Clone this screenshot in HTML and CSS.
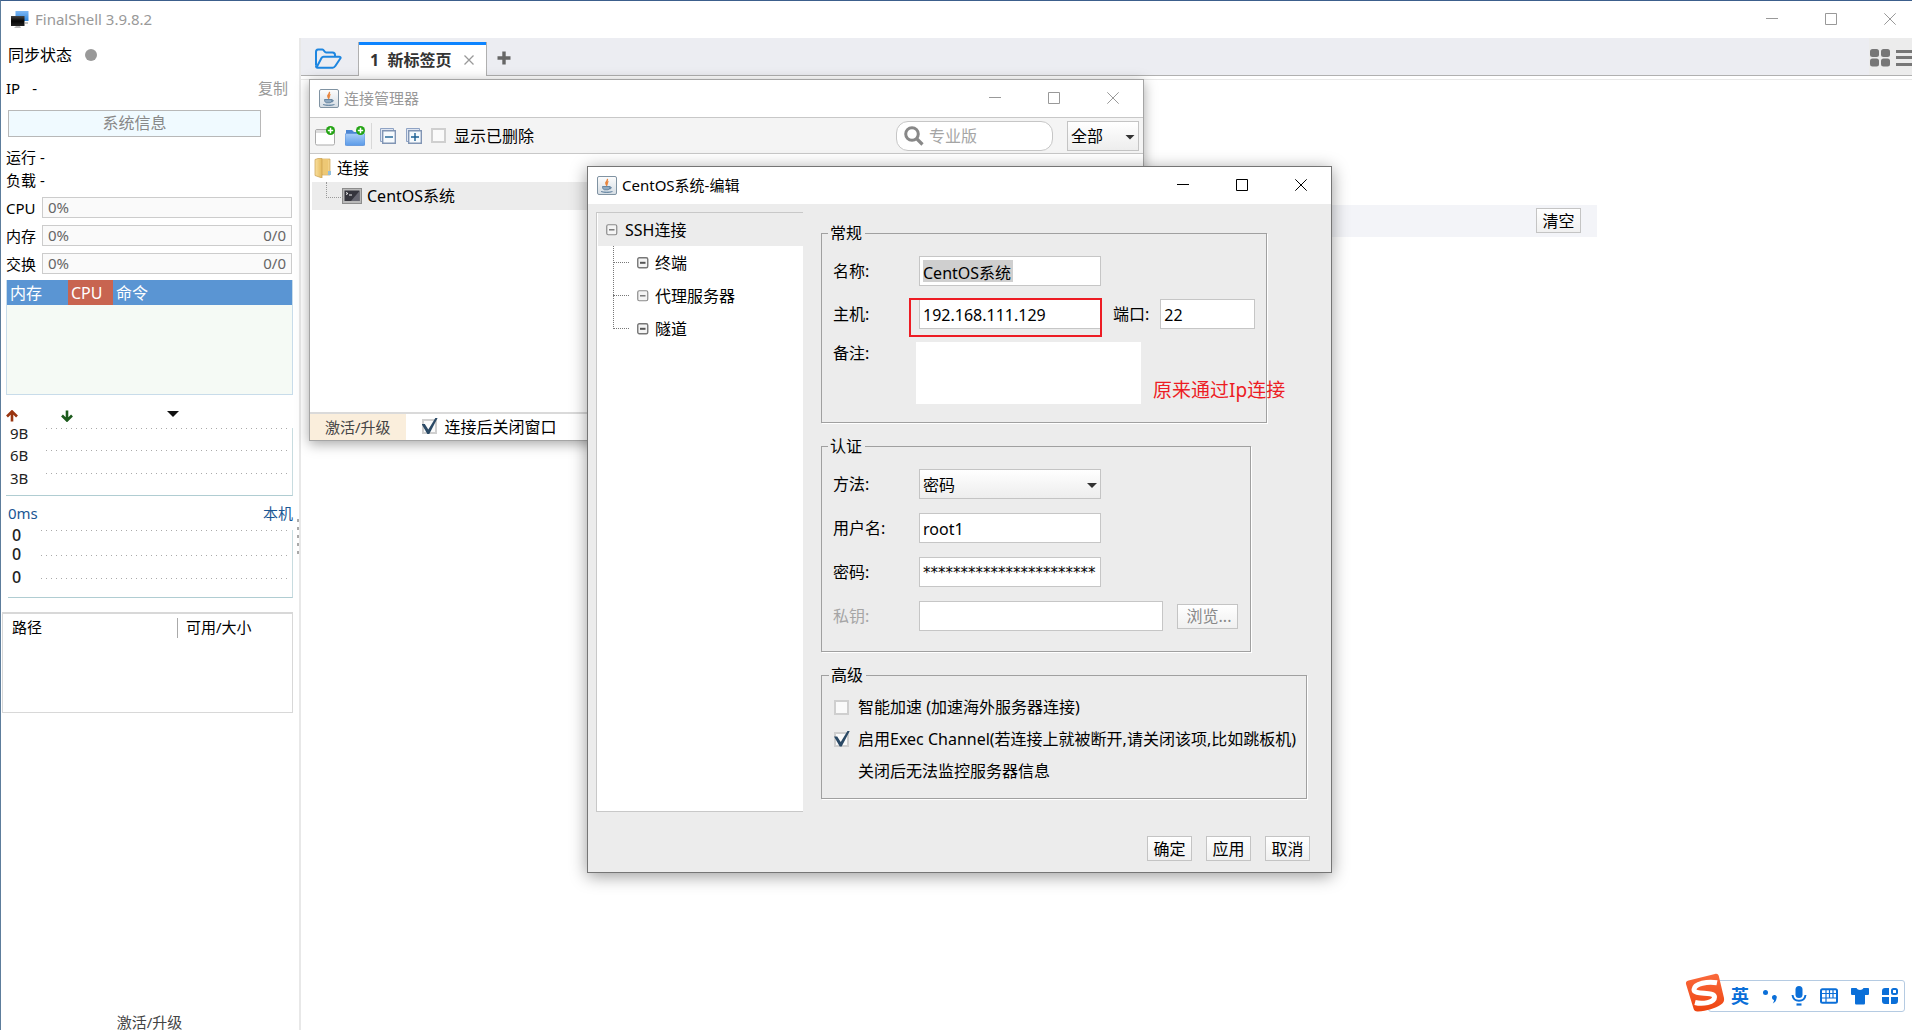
FILE: index.html
```html
<!DOCTYPE html>
<html lang="zh-CN">
<head>
<meta charset="utf-8">
<title>FinalShell 3.9.8.2</title>
<link rel="stylesheet" href="styles.css">
</head>
<body>
<svg class="defs" aria-hidden="true">
  <defs>
    <linearGradient id="g-blue" x1="0" y1="0" x2="0" y2="1"><stop offset="0" stop-color="#7db8f5"/><stop offset="1" stop-color="#2f86dc"/></linearGradient>
    <linearGradient id="g-fold" x1="0" y1="0" x2="0" y2="1"><stop offset="0" stop-color="#a9cdf8"/><stop offset="1" stop-color="#5b9be8"/></linearGradient>
    <linearGradient id="g-dark" x1="0" y1="0" x2="0" y2="1"><stop offset="0" stop-color="#444"/><stop offset=".5" stop-color="#050505"/><stop offset="1" stop-color="#222"/></linearGradient>
    <linearGradient id="g-gold" x1="0" y1="0" x2="1" y2="0"><stop offset="0" stop-color="#f9e0a0"/><stop offset="1" stop-color="#e5ba5c"/></linearGradient>
    <linearGradient id="g-java" x1="0" y1="0" x2="0" y2="1"><stop offset="0" stop-color="#fdfdfd"/><stop offset="1" stop-color="#d5dde4"/></linearGradient>
    <linearGradient id="g-sogou" x1="0" y1="0" x2="0" y2="1"><stop offset="0" stop-color="#fa6a3c"/><stop offset="1" stop-color="#ee4410"/></linearGradient>
    <symbol id="i-min" viewBox="0 0 12 12"><path d="M0 5.500h12" stroke="currentColor"/></symbol>
    <symbol id="i-max" viewBox="0 0 12 12"><path d="M.5.5h11v11H.5z" fill="none" stroke="currentColor"/></symbol>
    <symbol id="i-close" viewBox="0 0 12 12"><path d="M.3.3l11.400 11.400M11.700.3L.3 11.700" stroke="currentColor"/></symbol>
    <symbol id="i-java" viewBox="0 0 20 20">
      <rect x=".5" y=".5" width="19" height="18" rx="1.500" fill="url(#g-java)" stroke="#8093a2"/>
      <path d="M10 3c2 1.500-2.500 3-1 5 .6.8 1 1.300.6 2M11.500 5.500c-2 1.200-1.500 2-.8 3" fill="none" stroke="#e8843c" stroke-width="1.400"/>
      <path d="M5.500 10.500h7.500c0 2-.8 3-2 3.300H7.500c-1.200-.3-2-1.300-2-3.300zM13 11c2-.3 1.800 2-.8 2M4 15.500c3 1.300 8.500 1.300 11.500 0" fill="#8fa9c0" stroke="#5f7f9c" stroke-width=".9"/>
    </symbol>
    <symbol id="i-node" viewBox="0 0 12 12"><rect x=".75" y=".75" width="10" height="10" rx="1.500" fill="#f4f4f4" stroke="#8a8a8a" stroke-width="1.200"/><path d="M3 5.800h5.500" stroke="#666" stroke-width="1.300"/></symbol>
    <symbol id="i-node-bold" viewBox="0 0 12 12"><rect x=".75" y=".75" width="10" height="10" rx="1.500" fill="#f4f4f4" stroke="#777" stroke-width="1.400"/><path d="M3 5.800h5.500" stroke="#555" stroke-width="2"/></symbol>
  </defs>
</svg>

<header class="titlebar main-title">
  <svg class="app-icon" viewBox="0 0 18 18"><rect x="4.500" y="0" width="13" height="10" fill="url(#g-blue)"/><path d="M14 12h3" stroke="#888"/><rect x="0" y="5" width="13.500" height="10" fill="url(#g-dark)"/><path d="M5 15h4l1 2H3z" fill="#bbb"/></svg>
  <span class="title-text">FinalShell 3.9.8.2</span>
  <div class="win-controls">
    <button type="button" aria-label="最小化"><svg><use href="#i-min"/></svg></button>
    <button type="button" aria-label="最大化"><svg><use href="#i-max"/></svg></button>
    <button type="button" aria-label="关闭"><svg><use href="#i-close"/></svg></button>
  </div>
</header>

<div class="shell">
  <aside class="sidebar">
    <div class="line sync"><span>同步状态</span><i class="dot"></i></div>
    <div class="line ip"><span>IP</span><span>-</span><a href="#copy">复制</a></div>
    <button type="button" class="sysinfo">系统信息</button>
    <div class="stat first">运行 -</div>
    <div class="stat">负载 -</div>
    <div class="meters">
      <span>CPU</span><div class="meter"><span>0%</span></div>
      <span>内存</span><div class="meter"><span>0%</span><span>0/0</span></div>
      <span>交换</span><div class="meter"><span>0%</span><span>0/0</span></div>
    </div>
    <div class="procs">
      <table><thead><tr><th class="p-mem">内存</th><th class="p-cpu">CPU</th><th>命令</th></tr></thead></table>
    </div>
    <div class="net-head">
      <svg class="up" viewBox="0 0 12 12"><path d="M6 11.500V2M1 6.500l5-5 5 5" fill="none" stroke="#9a3510" stroke-width="2.600"/></svg>
      <svg class="down" viewBox="0 0 12 12"><path d="M6 .5V10M1 5.500l5 5 5-5" fill="none" stroke="#1c5a1c" stroke-width="2.600"/></svg>
      <svg class="drop" viewBox="0 0 12 12"><path d="M0 1h12l-6 6z" fill="#111"/></svg>
    </div>
    <div class="chart"><span>9B</span><i></i><span>6B</span><i></i><span>3B</span><i></i></div>
    <div class="ping-head"><span>0ms</span><a href="#host">本机</a></div>
    <div class="chart ping"><span>0</span><i></i><span>0</span><i></i><span>0</span><i></i></div>
    <div class="disks">
      <table><thead><tr><th class="d-path">路径</th><th>可用/大小</th></tr></thead></table>
    </div>
    <a class="upgrade" href="#upgrade">激活/升级</a>
    <i class="grip"></i>
  </aside>

  <main class="work">
    <nav class="tabs">
      <button type="button" class="open" aria-label="打开"><svg viewBox="0 0 28 22"><path d="M2 17.500V4c0-1.500.8-2.500 2-2.500h4.500c1.500 0 1.500 3 3.500 3h6.500c1.500 0 2.500.8 2.500 2.500v1.500M2.500 19.500L7.500 10c.5-.9 1-1.300 2-1.300h15.500c1.500 0 2 .8 1.300 1.800l-5 7.500c-.8 1.200-1.400 1.700-2.600 1.700H3.500c-1 0-1.500-.6-1.500-2" fill="none" stroke="#1e86e0" stroke-width="2"/></svg></button>
      <div class="tab"><span>1&nbsp; 新标签页</span><button type="button" aria-label="关闭标签"><svg viewBox="0 0 10 10"><path d="M.5.5l9 9M9.500.5l-9 9" stroke="#999" stroke-width="1.300"/></svg></button></div>
      <button type="button" class="add" aria-label="新建标签"><svg viewBox="0 0 14 14"><path d="M7 .5v13M.5 7h13" stroke="#666" stroke-width="3.400"/></svg></button>
      <div class="views">
        <button type="button" aria-label="网格"><svg width="20" height="18" viewBox="0 0 20 18" fill="#777"><rect width="9" height="8" rx="2.500"/><rect x="11" width="9" height="8" rx="2.500"/><rect y="9.500" width="9" height="8" rx="2.500"/><rect x="11" y="9.500" width="9" height="8" rx="2.500"/></svg></button>
        <button type="button" aria-label="列表"><svg width="16" height="18" viewBox="0 0 16 18"><path d="M0 2.500h16M0 8.500h16M0 15.500h16" stroke="#777" stroke-width="3"/></svg></button>
      </div>
    </nav>
    <section class="page">
      <div class="clear-row"><button type="button" class="btn">清空</button></div>
    </section>
  </main>
</div>

<section class="window manager" aria-label="连接管理器">
  <header class="titlebar">
    <svg class="java"><use href="#i-java"/></svg>
    <span class="title-text">连接管理器</span>
    <div class="win-controls">
      <button type="button" aria-label="最小化"><svg><use href="#i-min"/></svg></button>
      <button type="button" aria-label="最大化"><svg><use href="#i-max"/></svg></button>
      <button type="button" aria-label="关闭"><svg><use href="#i-close"/></svg></button>
    </div>
  </header>
  <div class="toolbar">
    <button type="button" aria-label="新建连接"><svg width="20" height="20" viewBox="0 0 20 20"><rect x=".5" y="3.500" width="19" height="15.500" rx="1.500" fill="#fff" stroke="#aaa"/><path d="M1 5.500h18" stroke="#ddd" stroke-width="3"/><circle cx="15.500" cy="4.500" r="4.500" fill="#22a312"/><path d="M15.500 1.800v5.400M12.800 4.500h5.400" stroke="#fff" stroke-width="1.500"/></svg></button>
    <button type="button" aria-label="新建文件夹"><svg width="20" height="20" viewBox="0 0 20 20"><path d="M1 4h6l2 2h10v13H1z" fill="#4b86d3"/><rect y="7.500" width="20" height="12" rx="1.500" fill="url(#g-fold)" stroke="#5c90d8" stroke-width=".8"/><circle cx="15.500" cy="4.500" r="4.500" fill="#22a312"/><path d="M15.500 1.800v5.400M12.800 4.500h5.400" stroke="#fff" stroke-width="1.500"/></svg></button>
    <i class="sep"></i>
    <button type="button" aria-label="全部折叠"><svg width="16" height="16" viewBox="0 0 16 16"><path d="M.5.500h13v13H.5z" fill="#dfe6f2" stroke="#8fa3c4"/><path d="M2.700 2.700h12.600v12.600H2.700z" fill="#f6fafd" stroke="#8195b4" stroke-width="1.400"/><path d="M5 9h8" stroke="#1b5f92" stroke-width="1.400"/></svg></button>
    <button type="button" class="expand" aria-label="全部展开"><svg width="16" height="16" viewBox="0 0 16 16"><path d="M.5.500h13v13H.5z" fill="#dfe6f2" stroke="#8fa3c4"/><path d="M2.700 2.700h12.600v12.600H2.700z" fill="#f6fafd" stroke="#8195b4" stroke-width="1.400"/><path d="M5 9h8M9 5v8" stroke="#1b5f92" stroke-width="1.400"/></svg></button>
    <label class="check"><input type="checkbox">显示已删除</label>
    <label class="search"><svg viewBox="0 0 20 20"><circle cx="8" cy="8" r="6.300" fill="none" stroke="#888" stroke-width="3"/><path d="M12.500 12.500l6 6" stroke="#888" stroke-width="3.200"/></svg><input type="text" placeholder="专业版" aria-label="搜索"></label>
    <span class="select filter"><select aria-label="筛选"><option>全部</option></select></span>
  </div>
  <div class="conn-tree">
    <div class="root"><svg viewBox="0 0 18 20"><path d="M8 1h8v16H8z" fill="#f3d286" stroke="#cfa75a" stroke-width=".7"/><path d="M14 13h3v4h-3z" fill="#93bfdc"/><path d="M8 1h6v15H8z" fill="#edc875"/><path d="M1 1.500l3-1h4V20l-7-2.500z" fill="url(#g-gold)" stroke="#c99f4e" stroke-width=".7"/></svg>连接</div>
    <div class="leaf"><svg viewBox="0 0 20 16"><rect x=".5" y=".5" width="19" height="15" fill="#b9b9b9" stroke="#8c8c8c"/><rect x="2.500" y="2.500" width="15" height="10.500" fill="#35353d"/><path d="M9 13L17.500 3v10z" fill="#666670"/><path d="M4 4.500l2 1-2 1M7 7h3" fill="none" stroke="#eee"/></svg>CentOS系统</div>
  </div>
  <footer class="manager-foot">
    <a href="#upgrade">激活/升级</a>
    <label class="check"><input type="checkbox" checked>连接后关闭窗口</label>
  </footer>
</section>

<section class="window dialog" role="dialog" aria-label="CentOS系统-编辑">
  <header class="titlebar">
    <svg class="java"><use href="#i-java"/></svg>
    <span class="title-text">CentOS系统-编辑</span>
    <div class="win-controls">
      <button type="button" aria-label="最小化"><svg><use href="#i-min"/></svg></button>
      <button type="button" aria-label="最大化"><svg><use href="#i-max"/></svg></button>
      <button type="button" aria-label="关闭"><svg><use href="#i-close"/></svg></button>
    </div>
  </header>
  <form class="edit">
    <div class="edit-body">
      <div class="nav-tree">
        <div class="node"><svg><use href="#i-node"/></svg>SSH连接</div>
        <ul>
          <li><svg><use href="#i-node-bold"/></svg>终端</li>
          <li><svg><use href="#i-node"/></svg>代理服务器</li>
          <li><svg><use href="#i-node-bold"/></svg>隧道</li>
        </ul>
      </div>
      <div class="groups">
        <fieldset class="general">
          <legend>常规</legend>
          <label for="name">名称:</label><input id="name" class="field picked" type="text" value="CentOS系统">
          <label for="host">主机:</label>
          <div class="host-row"><span class="host-wrap"><input id="host" class="field" type="text" value="192.168.111.129"></span><label for="port">端口:</label><input id="port" class="field port" type="text" value="22"></div>
          <label class="top" for="note">备注:</label><textarea id="note"></textarea>
          <span class="annotation">原来通过Ip连接</span>
        </fieldset>
        <fieldset class="auth">
          <legend>认证</legend>
          <label for="method">方法:</label><span class="select"><select id="method"><option>密码</option></select></span>
          <label for="user">用户名:</label><input id="user" class="field" type="text" value="root1">
          <label for="pass">密码:</label><input id="pass" class="field masked" type="text" value="***********************">
          <label class="off" for="key">私钥:</label>
          <div class="key-row"><input id="key" class="field key" type="text" disabled><button type="button" class="btn browse" disabled>浏览...</button></div>
        </fieldset>
        <fieldset class="advanced">
          <legend>高级</legend>
          <label class="check"><input type="checkbox">智能加速 (加速海外服务器连接)</label>
          <label class="check"><input type="checkbox" checked>启用Exec Channel(若连接上就被断开,请关闭该项,比如跳板机)</label>
          <p>关闭后无法监控服务器信息</p>
        </fieldset>
      </div>
    </div>
    <footer class="actions">
      <button type="button" class="btn">确定</button>
      <button type="button" class="btn">应用</button>
      <button type="button" class="btn">取消</button>
    </footer>
  </form>
</section>

<div class="ime">
  <svg class="sogou" viewBox="0 0 40 40"><path d="M3.500 7.500L30 1c2-.5 3.200.2 3.800 2L39 25c.5 3-.5 5-3 6.500-6 4-14 6.500-23 7-2.500.2-4-.8-4.500-3L1 11c-.4-2 .5-3 2.500-3.500z" fill="url(#g-sogou)"/><path d="M32 9.800C23 8 9.500 10.500 9 16.500c-.5 6 20.500 1.500 20.500 7.500 0 5.500-12 7.500-19.500 5.500" fill="none" stroke="#fff" stroke-width="5"/></svg>
  <span class="lang">英</span>
  <svg width="16" height="16" viewBox="0 0 16 16" fill="#0b6fd8"><circle cx="3.500" cy="4.500" r="2.500"/><path d="M10 9.500a2.400 2.400 0 1 1 4.500 1c-.2 2-1.500 4-3.700 5 .8-1.200 1.300-2.300 1.200-3.500-1-.2-2-1-2-2.500z"/></svg>
  <svg width="16" height="20" viewBox="0 0 16 20"><rect x="4.500" y="0" width="7" height="12" rx="3.500" fill="#0b6fd8"/><path d="M1.500 9c.5 4 3 5.800 6.500 5.800S14 13 14.500 9" fill="none" stroke="#0b6fd8" stroke-width="2"/><path d="M5.500 18.500h5" stroke="#0b6fd8" stroke-width="2.200"/></svg>
  <svg width="18" height="16" viewBox="0 0 18 16"><rect x="1" y="1.200" width="16" height="13.500" rx="1.500" fill="#fff" stroke="#0b6fd8" stroke-width="2"/><path d="M2 5.500h14M2 10h14M6 2v12M9.500 2v8M13 2v8" stroke="#0b6fd8" stroke-width="1.200"/></svg>
  <svg width="18" height="18" viewBox="0 0 18 18"><path d="M1 1h4.500c1 2.500 6 2.500 7 0H17c.6 0 1 .4 1 1v4.500c0 1-.5 1.500-1.500 1.500H14v8c0 1-.5 1.500-1.500 1.500h-7C4.500 17.500 4 17 4 16V8H1.500C.5 8 0 7.500 0 6.500V2c0-.6.4-1 1-1z" fill="#0b6fd8"/></svg>
  <svg width="16" height="16" viewBox="0 0 16 16" fill="#0b6fd8"><path d="M3 0h4v7H0V3a3 3 0 0 1 3-3zM0 9h7v7H3a3 3 0 0 1-3-3zM9 9h7v4a3 3 0 0 1-3 3H9z"/><rect x="10" y="1" width="5" height="5" rx="1.500" fill="none" stroke="#0b6fd8" stroke-width="2"/></svg>
</div>
</body>
</html>
```
FILE: styles.css
```css
* { box-sizing: border-box; }

body {
  margin: 0;
  min-height: 100vh;
  position: relative;
  display: flex;
  flex-direction: column;
  border-top: 1px solid #3c5f8c;
  border-left: 1px solid #5d7d9c;
  background: #fff;
  color: #000;
  font: 16px/22px "Noto Sans", "Noto Sans CJK SC", sans-serif;
}

button, input, select, textarea { font: inherit; color: inherit; margin: 0; }
button { padding: 0; border: 0; background: none; white-space: nowrap; }
a { color: inherit; text-decoration: none; }
table { border-collapse: collapse; width: 100%; }
th { font-weight: 400; text-align: left; padding: 0; }
svg { display: block; flex: none; }
.defs { position: absolute; width: 0; height: 0; }

/* Title bars */
.titlebar { display: flex; align-items: center; height: 37px; background: #fff; font-size: 15px; }
.title-text { padding-bottom: 2px; }
.main-title { padding: 0 16px 0 10px; color: #999; }
.app-icon { width: 18px; height: 18px; margin-right: 6px; }
.java { width: 20px; height: 20px; margin-right: 5px; }
.win-controls { display: flex; gap: 47px; margin-left: auto; padding-bottom: 1px; }
.win-controls svg { width: 12px; height: 12px; }

.shell { flex: 1; display: flex; }

/* Sidebar */
.sidebar {
  position: relative;
  flex: none;
  width: 300px;
  display: flex;
  flex-direction: column;
  padding: 0 6px 0 5px;
  border-right: 2px solid #e8e8e8;
  font-size: 15px;
}
.line { display: flex; align-items: center; height: 34px; }
.sync { gap: 13px; padding-left: 2px; font-size: 16px; }
.dot { width: 12px; height: 12px; border-radius: 50%; background: #999; }
.ip { gap: 12px; padding-bottom: 2px; }
.ip a { margin-left: auto; margin-right: 5px; color: #999; }
.sysinfo {
  height: 27px;
  margin: 4px 32px 0 2px;
  padding-bottom: 2px;
  border: 1px solid #b8b8b8;
  background: #f0faff;
  color: #888;
  font-size: 16px;
}
.stat { line-height: 23px; }
.stat.first { margin-top: 9px; }
.meters {
  display: grid;
  grid-template-columns: 30px 1fr;
  grid-auto-rows: 21px;
  gap: 7px 6px;
  align-items: center;
  margin: 5px 1px 0 0;
}
.meter {
  display: flex;
  justify-content: space-between;
  padding: 0 5px;
  border: 1px solid #ccc;
  background: #fafafa;
  color: #666;
  line-height: 19px;
}
.procs { height: 115px; margin-top: 6px; border: 1px solid #c8dcea; border-top: 0; background: #f5faf5; }
.procs table { background: #5a95d3; color: #fff; font-size: 16px; }
.procs th { height: 25px; padding-left: 3px; }
.procs .p-mem { width: 61px; }
.procs .p-cpu { width: 45px; background: #c86450; }
.net-head { display: flex; align-items: center; height: 24px; margin-top: 9px; }
.net-head svg { width: 12px; height: 12px; }
.down { margin-left: 43px; }
.drop { margin-left: 94px; }
.chart {
  display: grid;
  grid-template-columns: 36px 1fr;
  grid-template-rows: 22px 23px 22px;
  padding: 0 3px 0 4px;
  border-right: 1px solid #c8dce0;
  border-bottom: 1px solid #b0cdd2;
  color: #222;
  line-height: 10px;
}
.chart i {
  height: 1px;
  background: repeating-linear-gradient(90deg, #aaa 0 1px, transparent 1px 5px);
}
.ping-head { display: flex; justify-content: space-between; margin-left: 2px; line-height: 34px; color: #1b5794; }
.chart.ping {
  grid-template-columns: 29px 1fr;
  grid-template-rows: 19px 23px 25px;
  margin-left: 2px;
  font-size: 16px;
  font-weight: 500;
}
.ping span + i + span + i { margin-top: 6px; }
.disks { height: 101px; margin: 14px 0 0 -4px; border: 1px solid #d8d8d8; border-top-width: 2px; }
.disks th { height: 26px; padding: 0 0 0 9px; }
.disks .d-path { width: 174px; }
.disks th + th { background: linear-gradient(#aaa, #aaa) 0 4px / 1px 20px no-repeat; }
.upgrade { margin: auto 0 0; text-align: center; line-height: 16px; color: #444; }
.grip {
  position: absolute;
  right: 0;
  top: 481px;
  width: 2px;
  height: 40px;
  background: repeating-linear-gradient(#aaa 0 3px, transparent 3px 8px);
}

/* Tab strip */
.work { flex: 1; min-width: 0; }
.tabs {
  display: flex;
  align-items: center;
  height: 38px;
  background: linear-gradient(#b0b0b0, #b0b0b0) 0 100% / 100% 1px no-repeat #ecedf2;
}
.open { width: 57px; padding: 3px 0 0 13px; }
.open svg { width: 28px; height: 22px; }
.tab {
  align-self: stretch;
  display: flex;
  align-items: center;
  gap: 13px;
  margin-top: 4px;
  padding: 2px 12px 0 11px;
  border: solid #b0b0b0;
  border-width: 0 1px;
  box-shadow: inset 0 3px #0d84ff;
  background: #fff;
  color: #333;
  font-weight: 700;
}
.tab svg { width: 10px; height: 10px; }
.add { margin-left: 10px; padding-top: 2px; }
.add svg { width: 14px; height: 14px; }
.views { display: flex; align-self: stretch; align-items: center; gap: 6px; margin: 0 0 1px auto; padding: 2px 0 0 1px; background: #ececec; }
.page { margin-top: 3px; border-top: 1px solid #e8e8e8; padding-top: 125px; }
.clear-row {
  display: flex;
  justify-content: flex-end;
  max-width: 981px;
  margin: 0 auto;
  padding: 3px 16px 4px;
  background: #f3f4f8;
}

/* Shared controls */
.btn {
  height: 25px;
  min-width: 45px;
  padding: 0 5px;
  border: 1px solid #c4c4c4;
  background: linear-gradient(#fff, #f0f0f0);
}
.field {
  width: 182px;
  height: 30px;
  padding: 1px 3px 0;
  border: 1px solid #c6c6c6;
  background-color: #fff;
}
.select { position: relative; display: block; width: 182px; height: 30px; }
.select select {
  width: 100%;
  height: 100%;
  appearance: none;
  padding: 1px 3px 0;
  border: 1px solid #c4c4c4;
  border-radius: 0;
  background: linear-gradient(#fff, #ededed);
}
.select::after {
  content: "";
  position: absolute;
  right: 4px;
  top: 14px;
  width: 10px;
  height: 5px;
  background: #333;
  clip-path: polygon(0 0, 100% 0, 50% 100%);
  pointer-events: none;
}
.check { display: flex; align-items: center; gap: 8px; }
.check input {
  position: relative;
  appearance: none;
  width: 15px;
  height: 15px;
  border: 2px solid #cfcfcf;
  background: #fafafa;
}
.check input:checked::after {
  content: "";
  position: absolute;
  left: -2px;
  top: -3px;
  width: 16px;
  height: 16px;
  background: #2b4a66;
  clip-path: polygon(0 38%, 20% 38%, 42% 72%, 86% 0, 100% 0, 48% 100%, 36% 100%);
}

/* Floating windows */
.window { position: absolute; border: 1px solid #a5a5a5; background: #fff; }
.window .titlebar { padding: 0 24px 0 9px; }

.manager { left: 308px; top: 78px; width: 835px; box-shadow: 0 3px 12px rgba(0, 0, 0, .35); }
.manager .titlebar { color: #999; }
.toolbar {
  display: flex;
  align-items: center;
  height: 37px;
  padding: 0 4px 0 5px;
  border: solid #c8c8c8;
  border-width: 1px 0;
  background: #f4f4f4;
}
.toolbar button + button { margin-left: 10px; }
.sep { width: 1px; height: 26px; margin: 0 8px 0 6px; background: #d8d8d8; }
.toolbar .check { margin-left: 9px; margin-right: auto; }
.search {
  display: flex;
  align-items: center;
  gap: 5px;
  width: 157px;
  height: 30px;
  margin-right: 14px;
  padding: 0 7px;
  border: 1px solid #c6c6c6;
  border-radius: 12px;
  background: #fff;
}
.search svg { width: 20px; height: 20px; }
.search input { width: 100%; min-width: 0; padding: 0; border: 0; background: none; outline: 0; }
.search input::placeholder { color: #a5a5a5; opacity: 1; }
.filter { width: 72px; }
.conn-tree { height: 258px; padding-left: 2px; }
.root, .leaf { display: flex; align-items: center; height: 28px; }
.root { gap: 5px; padding-left: 2px; }
.root svg { width: 18px; height: 20px; }
.leaf { position: relative; gap: 5px; padding-left: 30px; background: #ececec; }
.leaf svg { width: 20px; height: 16px; }
.leaf::before {
  content: "";
  position: absolute;
  left: 14px;
  top: 0;
  width: 16px;
  height: 15px;
  border: dotted #999;
  border-width: 0 0 1px 1px;
}
.manager-foot { display: flex; align-items: stretch; height: 28px; border-top: 2px solid #dadada; }
.manager-foot a { padding: 0 15px; background: #faeedc; color: #444; font-size: 15px; line-height: 26px; }
.manager-foot .check { margin-left: 16px; padding-bottom: 1px; }

.dialog { left: 586px; top: 165px; width: 745px; border-color: #757575; background: #ececec; box-shadow: 0 3px 16px rgba(0, 0, 0, .4); }
.edit { padding: 8px 0 11px 8px; }
.edit-body { display: grid; grid-template-columns: 207px 1fr; gap: 18px; }
.nav-tree { border: solid #c8c8c8; border-width: 1px 0 1px 1px; background: #fff; }
.nav-tree svg { width: 12px; height: 12px; }
.node { display: flex; align-items: center; gap: 7px; height: 33px; margin-left: 1px; padding-left: 8px; background: #ececec; }
.nav-tree ul { position: relative; margin: 0 0 0 16px; padding: 0; list-style: none; }
.nav-tree ul::before { content: ""; position: absolute; left: 0; top: 0; height: 81px; border-left: 1px dotted #777; }
.nav-tree li { display: flex; align-items: center; gap: 6px; height: 33px; }
.nav-tree li::before { content: ""; width: 16px; margin-right: 2px; border-top: 1px dotted #777; }

.groups { display: flex; flex-direction: column; align-items: flex-start; gap: 12px; padding: 10px 0 13px; }
fieldset {
  position: relative;
  display: grid;
  grid-template-columns: 86px auto;
  align-items: center;
  min-width: 0;
  margin: 0;
  padding: 12px 8px 20px 11px;
  border: 1px solid #a0a0a0;
  box-shadow: 1px 1px 0 #fff;
}
legend { margin-left: -5px; padding: 0 3px 0 2px; background: #ececec; }
.general { width: 446px; padding-bottom: 18px; row-gap: 13px; }
.auth { width: 430px; row-gap: 14px; }
.advanced { width: 486px; grid-template-columns: 1fr; grid-auto-rows: 32px; padding: 5px 0 11px 12px; }
.advanced .check { gap: 9px; }
.advanced p { margin: 0 0 0 24px; }
.host-row, .key-row { display: flex; align-items: center; }
.host-row label { margin: 0 11px 0 12px; }
.host-wrap { position: relative; }
.host-wrap .field { display: block; }
/* red marker frame round the host field */
.host-wrap::after {
  content: "";
  position: absolute;
  inset: -1px -1px -8px -10px;
  border: 2px solid #ed1c24;
  pointer-events: none;
}
.field.port { width: 95px; }
.picked { background-image: linear-gradient(#cfcfcf, #cfcfcf); background-repeat: no-repeat; background-position: 3px 3px; background-size: 90px 22px; }
.top { align-self: start; }
textarea { width: 225px; height: 62px; margin-left: -3px; border: 0; resize: none; background: #fff; }
.annotation { position: absolute; left: 331px; bottom: 18px; color: #ed1c24; font-size: 19px; line-height: 28px; white-space: nowrap; }
.masked { font-family: "DejaVu Sans", sans-serif; font-size: 15px; }
.off { color: #a5a5a5; }
.field.key { width: 244px; }
.browse { width: 61px; margin-left: 14px; padding-left: 8px; color: #888; }
.actions { display: flex; justify-content: flex-end; gap: 14px; margin-top: 24px; padding-right: 21px; }

/* Input-method bar */
.ime {
  position: absolute;
  right: 7px;
  bottom: 18px;
  display: flex;
  align-items: center;
  gap: 13px;
  height: 32px;
  padding: 0 6px 0 0;
  border: 1px solid #b5cbe2;
  border-radius: 3px;
  background: #fff;
}
.sogou { width: 40px; height: 40px; margin: -6px -7px 0 -24px; }
.lang { color: #0b6fd8; font-size: 18px; font-weight: 700; }
```
